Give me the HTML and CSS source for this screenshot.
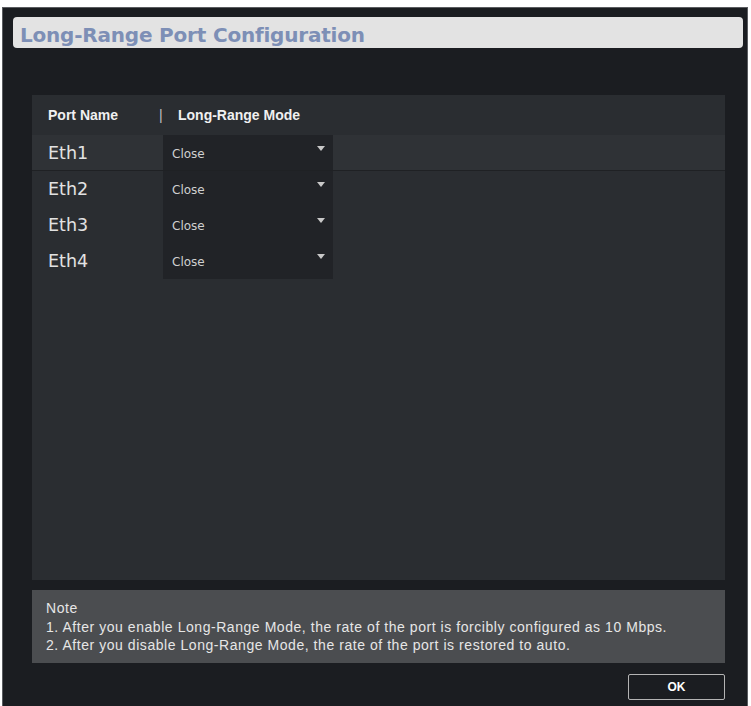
FILE: index.html
```html
<!DOCTYPE html>
<html lang="en">
<head>
    <meta charset="UTF-8">
    <meta name="viewport" content="width=device-width, initial-scale=1.0">
    <title>Long-Range Port Configuration</title>
    <link rel="stylesheet" href="styles.css">
</head>
<body>

    <div class="dialog">
        <div class="dialog-title">Long-Range Port Configuration</div>

        <div class="dialog-body">
            <div class="port-panel">
                <div class="port-row port-head">
                    <div class="col-name">Port Name</div>
                    <div class="col-sep">|</div>
                    <div class="col-mode">Long-Range Mode</div>
                </div>
                <div id="port-list"></div>
            </div>

            <div class="note">
                <div>Note</div>
                <div>1. After you enable Long-Range Mode, the rate of the port is forcibly configured as 10 Mbps.</div>
                <div>2. After you disable Long-Range Mode, the rate of the port is restored to auto.</div>
            </div>

            <div class="dialog-foot">
                <button class="btn-ok">OK</button>
            </div>
        </div>
    </div>

    <script>
        const ports = ["Eth1", "Eth2", "Eth3", "Eth4"];
        const list = document.getElementById("port-list");

        ports.forEach((name, i) => {
            const row = document.createElement("div");
            row.className = "port-row" + (i === 0 ? " active" : "");
            row.innerHTML =
                '<div class="col-name port-name">' + name + '</div>' +
                '<div class="mode-select"><span>Close</span>' +
                '<svg width="8" height="6" viewBox="0 0 8 6"><path d="M0 0h8L4 5z" fill="#c8c8c8"/></svg></div>';
            list.appendChild(row);
        });
    </script>

</body>
</html>
```

FILE: styles.css
```css
body {
    margin: 0;
    background: #fff;
    font-family: "Liberation Sans", Arial, sans-serif;
}
.dialog {
    margin: 7px 3px 0 2px;
    height: 699px;
    box-sizing: border-box;
    background: #1b1d21;
    border: 1px solid #5a5c60;
    border-bottom: none;
    display: flex;
    flex-direction: column;
}
.dialog-title {
    margin: 9px 4px 0 10px;
    height: 31px;
    box-sizing: border-box;
    padding: 8px 0 0 7px;
    background: #e3e3e3;
    border-radius: 4px;
    overflow: hidden;
    color: #7d8fb6;
    font-family: "DejaVu Sans", sans-serif;
    font-weight: bold;
    font-size: 20px;
    line-height: 20px;
    letter-spacing: -0.2px;
}
.dialog-body {
    padding: 47px 22px 0 29px;
    display: flex;
    flex-direction: column;
}
.port-panel {
    height: 485px;
    background: #2a2d31;
}
.port-row {
    display: flex;
    align-items: center;
    height: 36px;
}
.port-head {
    height: 40px;
    color: #f0f0f0;
    font-weight: bold;
    font-size: 14px;
}
.col-name {
    width: 111px;
    padding-left: 16px;
}
.col-sep {
    width: 19px;
    color: #c0c0c0;
    font-weight: normal;
}
.port-row.active {
    background: #2f3236;
    border-bottom: 1px solid #1f2124;
    height: 35px;
}
.port-name {
    color: #e2e2e2;
    font-family: "DejaVu Sans", sans-serif;
    font-size: 17.5px;
    width: 115px;
}
.mode-select {
    align-self: stretch;
    width: 170px;
    box-sizing: border-box;
    padding: 2px 8px 0 9px;
    background: #212327;
    display: flex;
    align-items: center;
    justify-content: space-between;
    color: #d0d0d0;
    font-family: "DejaVu Sans", sans-serif;
    font-size: 12px;
}
.mode-select svg {
    margin-bottom: 10px;
}
.note {
    margin-top: 10px;
    height: 73px;
    box-sizing: border-box;
    padding: 9px 14px;
    background: #4b4d50;
    color: #e6e6e6;
    font-size: 14px;
    line-height: 18.5px;
    letter-spacing: 0.55px;
}
.dialog-foot {
    display: flex;
    justify-content: flex-end;
    margin-top: 11px;
}
.btn-ok {
    width: 97px;
    height: 26px;
    background: transparent;
    border: 1px solid #b4b4b4;
    border-radius: 2px;
    color: #fff;
    font-family: "Liberation Sans", Arial, sans-serif;
    font-weight: bold;
    font-size: 12px;
    cursor: pointer;
}
```
